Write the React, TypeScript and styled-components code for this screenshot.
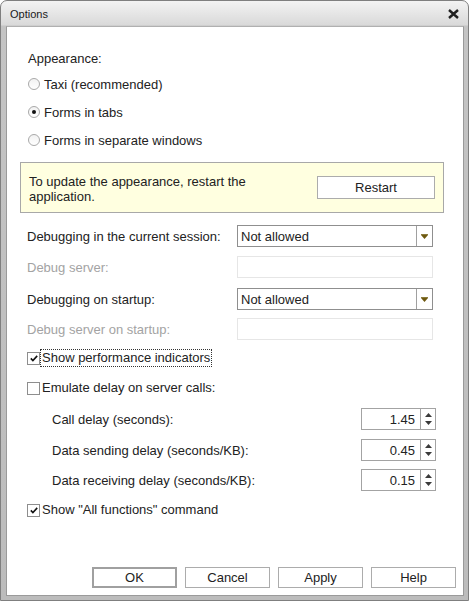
import React from "react";
import styled, { createGlobalStyle } from "styled-components";

const GlobalStyle = createGlobalStyle`
  html, body {
    margin: 0;
    padding: 0;
    background: #ffffff;
  }
  body {
    font-family: "Liberation Sans", Arial, sans-serif;
    font-size: 13px;
    color: #222222;
  }
`;

const Window = styled.div`
  box-sizing: border-box;
  width: 469px;
  height: 601px;
  display: flex;
  flex-direction: column;
  border: 1px solid #7f7f7f;
  border-radius: 7px 7px 0 0;
  padding: 0 4px 4px 5px;
  background: linear-gradient(#f3f3f3, #d9d9d9 24px, #c4c4c4 25px, #bcbcbc);
`;

const TitleBar = styled.div`
  box-sizing: border-box;
  height: 25px;
  display: flex;
  align-items: center;
  justify-content: space-between;
  padding: 1px 5px 0 4px;
`;

const Title = styled.span`
  font-size: 11px;
  color: #1a1a1a;
`;

const Content = styled.div`
  flex: 1;
  display: flex;
  flex-direction: column;
  background: #ffffff;
  border: 1px solid #9a9a9a;
  border-top-color: #b0b0b0;
`;

const Form = styled.div`
  display: flex;
  flex-direction: column;
  padding: 19px 0 0 13px;
`;

const Heading = styled.div`
  height: 24px;
  display: flex;
  align-items: center;
  padding-left: 8px;
`;

const RadioRow = styled.label`
  height: 28px;
  display: flex;
  align-items: center;
  padding-left: 8px;
  gap: 4px;
`;

const RadioCircle = styled.span<{ $checked?: boolean }>`
  box-sizing: border-box;
  width: 12px;
  height: 12px;
  border-radius: 50%;
  border: 1px solid #a9a9a9;
  background: linear-gradient(#f2f2f2, #ffffff);
  display: flex;
  align-items: center;
  justify-content: center;

  &::after {
    content: "";
    width: 4px;
    height: 4px;
    border-radius: 50%;
    background: ${(p) => (p.$checked ? "#111" : "transparent")};
  }
`;

const Notice = styled.div`
  box-sizing: border-box;
  width: 424px;
  height: 51px;
  margin-top: 8px;
  display: flex;
  align-items: center;
  justify-content: space-between;
  padding: 0 8px 0 8px;
  background: #ffffe0;
  border: 1px solid #a8a8a8;
`;

const NoticeText = styled.div`
  max-width: 230px;
  line-height: 15px;
  margin-top: 3px;
`;

const Button = styled.button<{ $width?: number; $default?: boolean }>`
  box-sizing: border-box;
  width: ${(p) => p.$width ?? 85}px;
  height: ${(p) => (p.$width ? 23 : 21)}px;
  padding: 0;
  background: #ffffff;
  border: ${(p) => (p.$default ? "2px solid #a0a0a0" : "1px solid #acacac")};
  font-family: "Liberation Sans", Arial, sans-serif;
  font-size: 13px;
  color: #222;
`;

const FieldRow = styled.div<{ $top: number }>`
  display: grid;
  grid-template-columns: 217px 196px;
  align-items: center;
  height: 22px;
  margin-top: ${(p) => p.$top}px;
`;

const FieldLabel = styled.span<{ $disabled?: boolean }>`
  padding-left: 7px;
  color: ${(p) => (p.$disabled ? "#a3a3a3" : "#222")};
`;

const Select = styled.div`
  box-sizing: border-box;
  height: 22px;
  display: flex;
  border: 1px solid #8f8f8f;
  background: #fff;
`;

const SelectValue = styled.span`
  flex: 1;
  display: flex;
  align-items: center;
  padding-left: 3px;
`;

const SelectArrow = styled.span`
  width: 15px;
  border-left: 1px solid #a0a0a0;
  display: flex;
  align-items: center;
  justify-content: center;
`;

const DisabledInput = styled.div`
  box-sizing: border-box;
  height: 22px;
  border: 1px solid #e6e6e6;
  background: #fff;
`;

const CheckRow = styled.label<{ $top: number }>`
  height: 22px;
  display: flex;
  align-items: center;
  padding-left: 7px;
  margin-top: ${(p) => p.$top}px;
`;

const CheckBox = styled.span`
  box-sizing: border-box;
  width: 13px;
  height: 13px;
  border: 1px solid #8e8e8e;
  background: #fff;
  display: flex;
  align-items: center;
  justify-content: center;
`;

const CheckText = styled.span<{ $focused?: boolean }>`
  line-height: 16px;
  padding: 0 1px;
  border: 1px dotted ${(p) => (p.$focused ? "#333" : "transparent")};
`;

const SpinRow = styled.div<{ $top: number }>`
  display: grid;
  grid-template-columns: 341px 75px;
  align-items: center;
  height: 22px;
  margin-top: ${(p) => p.$top}px;
`;

const SpinLabel = styled.span`
  padding-left: 32px;
`;

const Spin = styled.div`
  box-sizing: border-box;
  height: 22px;
  display: flex;
  border: 1px solid #a3a3a3;
  background: #fff;
`;

const SpinValue = styled.span`
  flex: 1;
  display: flex;
  align-items: center;
  justify-content: flex-end;
  padding-right: 5px;
`;

const SpinButtons = styled.span`
  width: 14px;
  border-left: 1px solid #a3a3a3;
  display: flex;
  flex-direction: column;
  align-items: center;
  justify-content: space-around;
  padding: 2px 0;
`;

const Footer = styled.div`
  margin-top: auto;
  display: flex;
  justify-content: flex-end;
  gap: 8px;
  padding: 0 7px 7px 0;
`;

const CloseIcon = () => (
  <svg width="11" height="10" viewBox="0 0 11 10">
    <path d="M1 1 L10 9 M10 1 L1 9" stroke="#202020" strokeWidth="2.4" />
  </svg>
);

const DropArrow = () => (
  <svg width="7" height="5" viewBox="0 0 7 5">
    <rect x="0" y="0" width="7" height="1" fill="#8a7a3a" />
    <polygon points="0,1 7,1 3.5,5" fill="#6e5910" />
  </svg>
);

const Tick = () => (
  <svg width="8" height="7" viewBox="0 0 8 7">
    <path d="M0.8 3.4 L2.9 5.6 L7.2 0.9" stroke="#111" strokeWidth="1.6" fill="none" />
  </svg>
);

const SpinUp = () => (
  <svg width="7" height="4" viewBox="0 0 7 4">
    <polygon points="3.5,0 7,4 0,4" fill="#3a3a3a" />
  </svg>
);

const SpinDown = () => (
  <svg width="7" height="4" viewBox="0 0 7 4">
    <polygon points="0,0 7,0 3.5,4" fill="#3a3a3a" />
  </svg>
);

const radios = [
  { label: "Taxi (recommended)", checked: false },
  { label: "Forms in tabs", checked: true },
  { label: "Forms in separate windows", checked: false },
];

const delays = [
  { label: "Call delay (seconds):", value: "1.45", top: 9 },
  { label: "Data sending delay (seconds/KB):", value: "0.45", top: 9 },
  { label: "Data receiving delay (seconds/KB):", value: "0.15", top: 8 },
];

export default function App() {
  return (
    <>
      <GlobalStyle />
      <Window>
        <TitleBar>
          <Title>Options</Title>
          <CloseIcon />
        </TitleBar>
        <Content>
          <Form>
            <Heading>Appearance:</Heading>
            {radios.map((r) => (
              <RadioRow key={r.label}>
                <RadioCircle $checked={r.checked} />
                {r.label}
              </RadioRow>
            ))}

            <Notice>
              <NoticeText>To update the appearance, restart the application.</NoticeText>
              <Button $width={118}>Restart</Button>
            </Notice>

            <FieldRow $top={12}>
              <FieldLabel>Debugging in the current session:</FieldLabel>
              <Select>
                <SelectValue>Not allowed</SelectValue>
                <SelectArrow>
                  <DropArrow />
                </SelectArrow>
              </Select>
            </FieldRow>
            <FieldRow $top={9}>
              <FieldLabel $disabled>Debug server:</FieldLabel>
              <DisabledInput />
            </FieldRow>
            <FieldRow $top={10}>
              <FieldLabel>Debugging on startup:</FieldLabel>
              <Select>
                <SelectValue>Not allowed</SelectValue>
                <SelectArrow>
                  <DropArrow />
                </SelectArrow>
              </Select>
            </FieldRow>
            <FieldRow $top={8}>
              <FieldLabel $disabled>Debug server on startup:</FieldLabel>
              <DisabledInput />
            </FieldRow>

            <CheckRow $top={7}>
              <CheckBox>
                <Tick />
              </CheckBox>
              <CheckText $focused>Show performance indicators</CheckText>
            </CheckRow>
            <CheckRow $top={8}>
              <CheckBox />
              <CheckText>Emulate delay on server calls:</CheckText>
            </CheckRow>

            {delays.map((d) => (
              <SpinRow key={d.label} $top={d.top}>
                <SpinLabel>{d.label}</SpinLabel>
                <Spin>
                  <SpinValue>{d.value}</SpinValue>
                  <SpinButtons>
                    <SpinUp />
                    <SpinDown />
                  </SpinButtons>
                </Spin>
              </SpinRow>
            ))}

            <CheckRow $top={8}>
              <CheckBox>
                <Tick />
              </CheckBox>
              <CheckText>Show "All functions" command</CheckText>
            </CheckRow>
          </Form>

          <Footer>
            <Button $default>OK</Button>
            <Button>Cancel</Button>
            <Button>Apply</Button>
            <Button>Help</Button>
          </Footer>
        </Content>
      </Window>
    </>
  );
}
